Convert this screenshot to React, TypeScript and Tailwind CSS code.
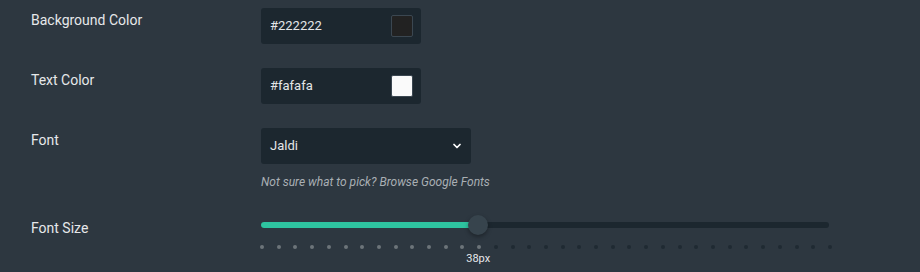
import { ChevronDown } from "lucide-react";

const ticks = Array.from({ length: 35 }, (_, i) => i);

const ColorField = ({ value, swatch }: { value: string; swatch: string }) => (
  <div className="flex h-9 w-40 items-center justify-between rounded-[3px] bg-[#1c272f] pl-[9px] pr-2">
    <span className="text-[13px] text-[#e4e6e8]">{value}</span>
    <span className={`h-[22px] w-[22px] rounded-[2px] border border-[#3b4751] ${swatch}`} />
  </div>
);

const App = () => {
  // 38px on a 12–80 range, step 2
  const pct = ((38 - 12) / (80 - 12)) * 100;

  return (
    <div
      className="h-[272px] w-[920px] overflow-hidden bg-[#2d3740] pl-[31px] pt-2 text-[#e6e8ea]"
      style={{ fontFamily: "Roboto, 'Liberation Sans', sans-serif" }}
    >
      {/* Background Color */}
      <div className="flex">
        <div className="w-[230px] pt-[2px] text-[14px] leading-5">Background Color</div>
        <ColorField value="#222222" swatch="bg-[#222222]" />
      </div>

      {/* Text Color */}
      <div className="mt-6 flex">
        <div className="w-[230px] pt-[2px] text-[14px] leading-5">Text Color</div>
        <ColorField value="#fafafa" swatch="bg-[#fafafa]" />
      </div>

      {/* Font */}
      <div className="mt-6 flex">
        <div className="w-[230px] pt-[2px] text-[14px] leading-5">Font</div>
        <div>
          <div className="flex h-9 w-[210px] items-center justify-between rounded-[3px] bg-[#1c272f] pl-[9px] pr-[8px]">
            <span className="text-[13px] text-[#e4e6e8]">Jaldi</span>
            <ChevronDown className="h-3 w-3 text-white" strokeWidth={3.5} />
          </div>
          <div className="mt-[10px] text-[12px] italic leading-4 text-[#a9afb4]">
            Not sure what to pick? <a href="#" className="text-[#a9afb4]">Browse Google Fonts</a>
          </div>
        </div>
      </div>

      {/* Font Size */}
      <div className="mt-[24px] flex">
        <div className="w-[230px] pt-[4px] text-[14px] leading-5">Font Size</div>
        <div className="w-[568px] pt-[1px]">
          <div className="relative h-5">
            <div className="absolute left-0 right-0 top-[7px] h-[6px] rounded-full bg-[#1c272f]" />
            <div
              className="absolute left-0 top-[7px] h-[6px] rounded-full bg-[#2ec4a0]"
              style={{ width: `${pct}%` }}
            />
            <div
              className="absolute top-0 h-5 w-5 -translate-x-1/2 rounded-full bg-[#37444d] shadow-[0_2px_4px_rgba(0,0,0,0.35)]"
              style={{ left: `${pct}%` }}
            />
          </div>
          <div className="relative">
            <div className="-ml-[1px] mt-[10px] flex w-[572px] justify-between">
              {ticks.map((i) => (
                <span
                  key={i}
                  className={`h-1 w-1 rounded-full ${i <= 13 ? "bg-[#6c7479]" : "bg-[#1f2a32]"}`}
                />
              ))}
            </div>
            <div
              className="absolute top-[6px] -translate-x-1/2 text-[11px] leading-4 text-[#e6e8ea]"
              style={{ left: `${pct}%` }}
            >
              38px
            </div>
          </div>
        </div>
      </div>
    </div>
  );
};

export default App;
